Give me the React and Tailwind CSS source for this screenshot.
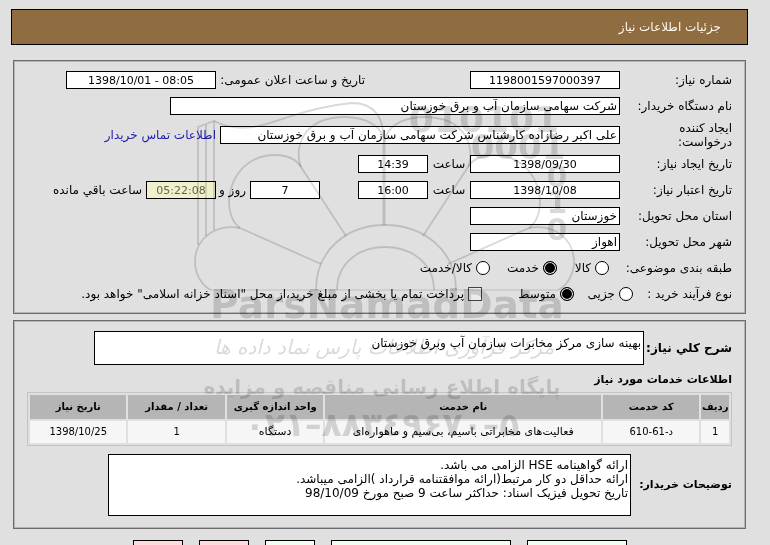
import clsx from 'clsx'

const columns = [
  { title: 'ردیف', width: 'w-[4%]' },
  { title: 'کد خدمت', width: 'w-[14%]' },
  { title: 'نام خدمت', width: 'w-[40%]' },
  { title: 'واحد اندازه گیری', width: 'w-[14%]' },
  { title: 'تعداد / مقدار', width: 'w-[14%]' },
  { title: 'تاریخ نیاز', width: 'w-[14%]' },
]

const services = [
  ['1', 'د-61-610', 'فعالیت‌های مخابراتی باسیم، بی‌سیم و ماهواره‌ای', 'دستگاه', '1', '1398/10/25'],
]

const actions = [
  { label: 'چاپ', style: 'w-[100px] bg-[#f0fff0]' },
  { label: 'پیوست', style: 'w-[180px] bg-[#f0fff0]' },
  { label: 'تایید', style: 'w-[50px] bg-[#f0fff0]' },
  { label: 'بازگشت', style: 'w-[50px] bg-[#ffdcdc]' },
  { label: 'خروج', style: 'w-[50px] bg-[#ffdcdc]' },
]

function Panel({ className, children }) {
  return (
    <section className={clsx('mx-0.5 border border-[#6c6c6c] shadow-[inset_0_0_0_1px_#b4b4b4] pr-[13px]', className)}>{children}</section>
  )
}

function Row({ label, htmlFor, tall, children }) {
  return (
    <div className={clsx('flex items-center', tall ? 'h-8' : 'h-[26px]')}>
      <label htmlFor={htmlFor} className={clsx('w-28 shrink-0', tall ? 'pl-6' : 'whitespace-nowrap')}>{label}</label>
      {children}
    </div>
  )
}

function Field({ className, ...props }) {
  return <input type="text" readOnly className={clsx('h-[18px] border border-black px-0.5', className)} {...props} />
}

// dates, times and counters are centred and a little smaller than the text
function NumberField({ className, ...props }) {
  return <Field className={clsx('text-center text-[11px]', className)} {...props} />
}

function Choice({ name, label, checked, className }) {
  return (
    <label className={clsx('flex items-center gap-1 whitespace-nowrap', className)}>
      <input type="radio" name={name} defaultChecked={checked}
        className="w-3.5 h-3.5 shrink-0 appearance-none rounded-full border border-black bg-white checked:bg-black checked:shadow-[inset_0_0_0_1px_white]" />
      {label}
    </label>
  )
}

function PetalHalf() {
  return (
    <>
      <path d="M346 236 L301 167 C294 150 301 117 345 117 C366 117 384 127 384 142" />
      <path d="M321 264 L240 228 C218 212 229 155 275 155 C288 155 296 159 301 167" />
      <path d="M240 228 C214 223 195 240 195 262 C195 274 202 286 211 290" />
    </>
  )
}

function Watermark() {
  return (
    <svg viewBox="190 90 390 360" aria-hidden="true"
      className="absolute left-[190px] top-[90px] w-[390px] h-[360px] pointer-events-none mix-blend-multiply">
      <g fill="none" stroke="#000" strokeOpacity="0.15" strokeWidth="1.8">
        <PetalHalf />
        <g transform="translate(769 0) scale(-1 1)"><PetalHalf /></g>
        <path d="M384 142 V225" strokeWidth="3" />
        <path d="M316 290 C316 250 347 225 385 225 C423 225 456 250 456 290" />
        <path d="M337 290 C337 264 358 247 385 247 C412 247 434 264 434 290" />
        <path d="M211 290 H558" strokeWidth="1" />
        <path d="M198 245 V127 L214 121 V230 M206 236 V124" />
        <path d="M214 121 C240 134 262 126 285 118 C312 109 330 105 352 103 C373 103 384 116 384 142" />
      </g>
      <g fill="#000" fillOpacity="0.15" textAnchor="middle" fontWeight="bold" fontFamily="'DejaVu Sans', sans-serif">
        <text x="484" y="132" fontSize="36" direction="ltr">010101</text>
        <text x="518" y="159" fontSize="34" direction="ltr">0001</text>
        <text x="557" y="187" fontSize="30">0</text>
        <text x="557" y="213" fontSize="30">1</text>
        <text x="557" y="240" fontSize="30">0</text>
        <text x="387" y="318" fontSize="39" direction="ltr">ParsNamadData</text>
        <text x="384" y="354" fontSize="20" fontStyle="italic" fontWeight="normal" direction="rtl">مرکز فرآوری اطلاعات پارس نماد داده ها</text>
        <text x="382" y="394" fontSize="20" direction="rtl">پایگاه اطلاع رسانی مناقصه و مزایده</text>
        <text x="382" y="436" fontSize="33" direction="ltr">۰۲۱–۸۸۳٤۹۶۷۰–۵</text>
      </g>
    </svg>
  )
}

export default function App() {
  return (
    <div dir="rtl" className="relative h-screen overflow-hidden bg-[#e0e0e0] pt-[9px] pl-[11px] pr-[22px] text-black text-[12px] leading-[14px] font-['DejaVu_Sans',Tahoma,sans-serif]">
      <header className="flex items-center h-9 border border-black bg-[#8f6d41] pr-[26px]">
        <h1 className="text-[#fff8ee]">جزئیات اطلاعات نیاز</h1>
      </header>

      <Panel className="mt-[15px] py-1.5">
        <Row label="شماره نیاز:" htmlFor="number">
          <NumberField id="number" defaultValue="1198001597000397" className="w-[150px] bg-white" />
          <label htmlFor="announced" className="mr-[105px] ml-1 w-[145px] whitespace-nowrap">تاریخ و ساعت اعلان عمومی:</label>
          <NumberField id="announced" dir="ltr" defaultValue="1398/10/01 - 08:05" className="w-[150px] bg-white" />
        </Row>
        <Row label="نام دستگاه خریدار:" htmlFor="buyer">
          <Field id="buyer" defaultValue="شرکت سهامی سازمان آب و برق خوزستان" className="w-[450px] bg-white" />
        </Row>
        <Row label="ایجاد کننده درخواست:" htmlFor="creator" tall>
          <Field id="creator" defaultValue="علی اکبر رضازاده کارشناس شرکت سهامی سازمان آب و برق خوزستان" className="w-[400px] bg-white" />
          <a href="#contact" className="mr-1 text-[#2020b0] whitespace-nowrap">اطلاعات تماس خریدار</a>
        </Row>
        <Row label="تاریخ ایجاد نیاز:" htmlFor="created">
          <NumberField id="created" defaultValue="1398/09/30" className="w-[150px] bg-white" />
          <label htmlFor="created-time" className="w-[42px] text-center">ساعت</label>
          <NumberField id="created-time" defaultValue="14:39" className="w-[70px] bg-white" />
        </Row>
        <Row label="تاریخ اعتبار نیاز:" htmlFor="valid">
          <NumberField id="valid" defaultValue="1398/10/08" className="w-[150px] bg-white" />
          <label htmlFor="valid-time" className="w-[42px] text-center">ساعت</label>
          <NumberField id="valid-time" defaultValue="16:00" className="w-[70px] bg-white" />
          <NumberField id="days" defaultValue="7" className="mr-[38px] w-[70px] bg-white" />
          <label htmlFor="days" className="w-[34px] pr-1 whitespace-nowrap">روز و</label>
          <NumberField id="remaining" defaultValue="05:22:08" className="w-[70px] bg-[#f0f0cc] text-[#66664a]" />
          <label htmlFor="remaining" className="mr-1 whitespace-nowrap">ساعت باقي مانده</label>
        </Row>
        <Row label="استان محل تحویل:" htmlFor="province">
          <Field id="province" defaultValue="خوزستان" className="w-[150px] bg-white" />
        </Row>
        <Row label="شهر محل تحویل:" htmlFor="city">
          <Field id="city" defaultValue="اهواز" className="w-[150px] bg-white" />
        </Row>
        <div role="radiogroup" aria-label="طبقه بندی موضوعی" className="flex items-center h-[26px]">
          <span className="w-[123px] shrink-0">طبقه بندی موضوعی:</span>
          <Choice name="category" label="کالا" className="w-[52px]" />
          <Choice name="category" label="خدمت" checked className="w-[67px]" />
          <Choice name="category" label="کالا/خدمت" />
        </div>
        <div role="radiogroup" aria-label="نوع فرآیند خرید" className="flex items-center h-[26px]">
          <span className="w-[99px] shrink-0">نوع فرآیند خرید :</span>
          <Choice name="process" label="جزیی" className="w-[59px]" />
          <Choice name="process" label="متوسط" checked className="w-[92px]" />
          <label className="flex items-center gap-1 whitespace-nowrap">
            <input type="checkbox" className="w-3.5 h-3.5 shrink-0 appearance-none border border-[#444] bg-[#ececec] checked:bg-black" />
            پرداخت تمام یا بخشی از مبلغ خرید،از محل "اسناد خزانه اسلامی" خواهد بود.
          </label>
        </div>
      </Panel>

      <Panel className="mt-1.5 pt-2.5 pb-3 pl-[13px]">
        <div className="flex items-center">
          <label htmlFor="summary" className="w-[88px] shrink-0 text-[12px] font-bold whitespace-nowrap">شرح کلي نیاز:</label>
          <textarea id="summary" readOnly defaultValue="بهینه سازی مرکز مخابرات سازمان آب وبرق خوزستان"
            className="block w-[550px] h-[34px] resize-none border border-black bg-white px-0.5 py-1 overflow-hidden" />
        </div>
        <h2 className="mt-2 mb-[5px] text-[11px] leading-[14px] font-bold">اطلاعات خدمات مورد نیاز</h2>
        <table className="w-full table-fixed border-separate border-spacing-[2px] border border-[#c4c4c4] text-center">
          <thead>
            <tr>
              {columns.map(c => (
                <th key={c.title} className={clsx('h-6 bg-[#b5b5b5] text-[10px] font-bold whitespace-nowrap', c.width)}>{c.title}</th>
              ))}
            </tr>
          </thead>
          <tbody>
            {services.map(s => (
              <tr key={s[1]}>
                {s.map((cell, i) => (
                  <td key={columns[i].title} className={clsx('h-[22px] bg-[#f6f6f6] whitespace-nowrap', /\d/.test(cell) ? 'text-[10px]' : 'text-[11px]')}>{cell}</td>
                ))}
              </tr>
            ))}
          </tbody>
        </table>
        <div className="flex items-center mt-2">
          <label htmlFor="notes" className="w-[101px] shrink-0 text-[11px] font-bold whitespace-nowrap">توضیحات خریدار:</label>
          <textarea id="notes" readOnly
            defaultValue={'ارائه گواهینامه HSE الزامی می باشد.\nارائه حداقل دو کار مرتبط(ارائه موافقتنامه قرارداد )الزامی میباشد.\nتاریخ تحویل فیزیک اسناد: حداکثر ساعت 9 صبح مورخ 98/10/09'}
            className="block w-[523px] h-[62px] resize-none border border-black bg-white px-0.5 py-[3px] text-[12px] overflow-hidden" />
        </div>
      </Panel>

      <footer className="flex gap-4 mt-[11px] pr-[121px]">
        {actions.map(a => (
          <button key={a.label} type="button" aria-label={a.label} className={clsx('h-6 shrink-0 border border-black', a.style)} />
        ))}
      </footer>

      <Watermark />
    </div>
  )
}
